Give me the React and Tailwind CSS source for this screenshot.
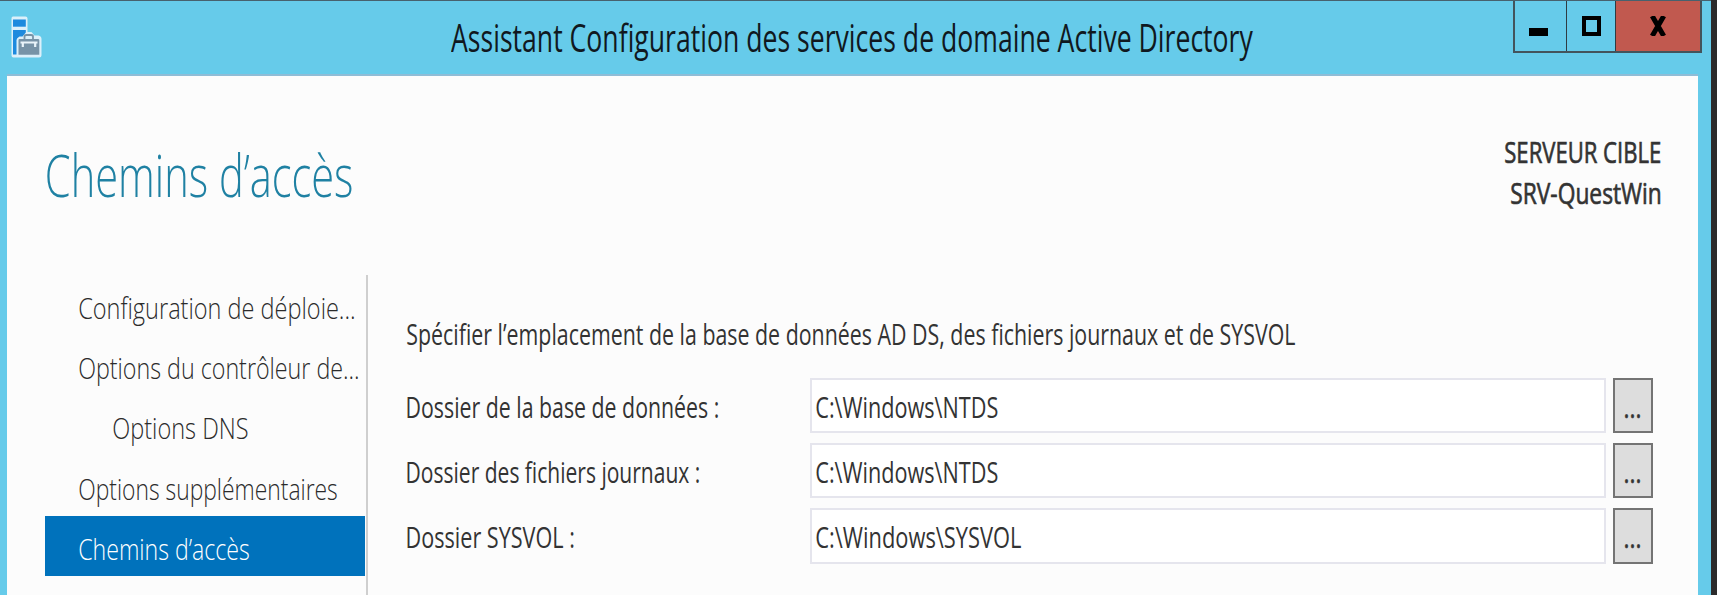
import { useLayoutEffect, useRef } from "react";

// Condensed single-line text: the glyphs are squeezed horizontally so that the
// drawn line is exactly `width` pixels wide.
function Condensed({ width, className = "", children }) {
  const ref = useRef(null);
  useLayoutEffect(() => {
    const el = ref.current;
    const cs = getComputedStyle(el);
    const ctx = document.createElement("canvas").getContext("2d");
    ctx.font = `${cs.fontWeight} ${cs.fontSize} ${cs.fontFamily}`;
    const m = ctx.measureText(children);
    const k = width / (m.actualBoundingBoxRight + m.actualBoundingBoxLeft);
    el.style.transform = `translateX(${m.actualBoundingBoxLeft * k}px) scaleX(${k})`;
  }, [width, children]);
  return (
    <div className={`shrink-0 ${className}`} style={{ width }}>
      <span ref={ref} className="block w-max origin-left whitespace-pre">
        {children}
      </span>
    </div>
  );
}

function ServerIcon() {
  return (
    <svg className="h-[43px] w-[31px]" viewBox="0 0 31 43">
      <path
        d="M2 0.5H14.500Q16.500 0.5 16.500 2.5V16H20.500L23.500 19.500H27.500Q30.500 20 30.500 23V39Q30.500 41.500 28 41.500H2.500Q0.500 41.500 0.500 39.500V2.500Q0.500 0.500 2 0.500Z"
        fill="#dcf0fa"
      />
      <rect x="2" y="3.500" width="12.800" height="7.200" fill="#1d8ade" />
      <path d="M2 14H14.800V16.500L11.500 20.500H8.500Q5.500 22 5.500 24V38.500H2Z" fill="#1d8ade" />
      <path d="M7.500 24Q7.500 23 8.500 23H27Q28.300 23 28.300 24V38.800H7.500Z" fill="#7793a7" />
      <path d="M13.500 23V20.500Q13.500 19 15.500 19H20Q22 19 22 20.500V23" fill="none" stroke="#7793a7" strokeWidth="1.800" />
      <path d="M9.500 26.500H26.500M11.800 27V31M24.200 27V31" fill="none" stroke="#e9f4fa" strokeWidth="2.200" />
    </svg>
  );
}

const steps = [
  { label: "Configuration de déploie...", width: 275 },
  { label: "Options du contrôleur de...", width: 279 },
  { label: "Options DNS", width: 134.5, child: true },
  { label: "Options supplémentaires", width: 258 },
  { label: "Chemins d’accès", width: 170, active: true },
];

const folders = [
  { label: "Dossier de la base de données :", width: 311, value: "C:\\Windows\\NTDS", valueWidth: 182 },
  { label: "Dossier des fichiers journaux :", width: 292, value: "C:\\Windows\\NTDS", valueWidth: 182 },
  { label: "Dossier SYSVOL :", width: 166.5, value: "C:\\Windows\\SYSVOL", valueWidth: 205 },
];

function TitleBar() {
  return (
    <header className="flex h-[73px] items-start">
      <div className="pt-[15px] pl-[11px]">
        <ServerIcon />
      </div>
      <h1 className="ml-[409px] pt-[1px] text-[38px] leading-[70px] text-[#101820]">
        <Condensed width={802.5}>Assistant Configuration des services de domaine Active Directory</Condensed>
      </h1>
      <div className="ml-auto mr-[9px] flex h-[52px] border-2 border-t-0 border-[#43545c]">
        <button className="flex w-[52px] justify-center border-r border-[#2f3c42] pt-[27px] pr-[3px]" aria-label="Réduire">
          <span className="block h-[8px] w-[19px] bg-black" />
        </button>
        <button className="flex w-[49px] justify-center border-r border-[#2f3c42] pt-[15px] pl-[2px]" aria-label="Agrandir">
          <span className="block h-[20px] w-[19px] border-4 border-black" />
        </button>
        <button className="flex w-[84px] justify-center bg-[#c1594f] pt-[15px]" aria-label="Fermer">
          <svg className="h-[20px] w-[18px]" viewBox="0 0 18 20">
            <path d="M3.200 0L14.800 20M14.800 0L3.200 20" stroke="black" strokeWidth="5" />
          </svg>
        </button>
      </div>
    </header>
  );
}

function Sidebar() {
  return (
    <nav className="flex w-[323px] flex-col border-r-2 border-[#cfcfcf] text-[30px] font-light leading-[54px] text-[#2b2b2b]">
      {steps.map((s) => (
        <div
          key={s.label}
          className={`h-[60.2px] w-[320px] pt-[6px] ${s.child ? "pl-[67.5px]" : "pl-[34px]"} ${
            s.active ? "bg-[#0072bc] text-white" : ""
          }`}
        >
          <Condensed width={s.width}>{s.label}</Condensed>
        </div>
      ))}
    </nav>
  );
}

function FolderRow({ folder }) {
  return (
    <div className="flex h-[55.5px] leading-[58px]">
      <div className="w-[403px]">
        <Condensed width={folder.width}>{folder.label}</Condensed>
      </div>
      <div className="w-[796px] border-[2px] border-[#e5e5ed] bg-white pl-[3.5px] leading-[54px]">
        <Condensed width={folder.valueWidth}>{folder.value}</Condensed>
      </div>
      <button
        className="ml-[7px] flex w-[39.5px] justify-center border-2 border-[#747474] bg-[#dddddd] leading-[54px]"
        aria-label="Parcourir"
      >
        <Condensed width={15} className="[-webkit-text-stroke:0.5px]">
          ...
        </Condensed>
      </button>
    </div>
  );
}

export default function App() {
  return (
    <div className="flex h-[595px] w-[1717px] overflow-hidden bg-[#2b2b2b] font-['Open_Sans','Noto_Sans',sans-serif]">
      <div className="flex w-[1710.5px] flex-col border-t border-[#47616e] bg-[#66cbea]">
        <TitleBar />
        <main className="mr-[12.5px] ml-[7px] flex flex-1 flex-col border-t-2 border-[#8fbcd6] bg-[#fcfcfc] pl-[38px]">
          <div className="flex h-[199px] justify-between pr-[38.5px]">
            <h2 className="pt-[59px] pl-[2px] text-[58px] font-light leading-[80px] text-[#1f81a3]">
              <Condensed width={305}>Chemins d’accès</Condensed>
            </h2>
            <div className="flex flex-col items-end pt-[56px] text-[30px] leading-[40.5px] text-[#333] [-webkit-text-stroke:0.7px]">
              <Condensed width={155}>SERVEUR CIBLE</Condensed>
              <Condensed width={149}>SRV-QuestWin</Condensed>
            </div>
          </div>
          <div className="flex flex-1">
            <Sidebar />
            <section className="flex flex-col pl-[39px] text-[30px] text-[#333]">
              <div className="pt-[39px] leading-[40px]">
                <Condensed width={888}>Spécifier l’emplacement de la base de données AD DS, des fichiers journaux et de SYSVOL</Condensed>
              </div>
              <div className="flex flex-col gap-[9.8px] pt-[23.5px]">
                {folders.map((f) => (
                  <FolderRow key={f.label} folder={f} />
                ))}
              </div>
            </section>
          </div>
        </main>
      </div>
    </div>
  );
}
